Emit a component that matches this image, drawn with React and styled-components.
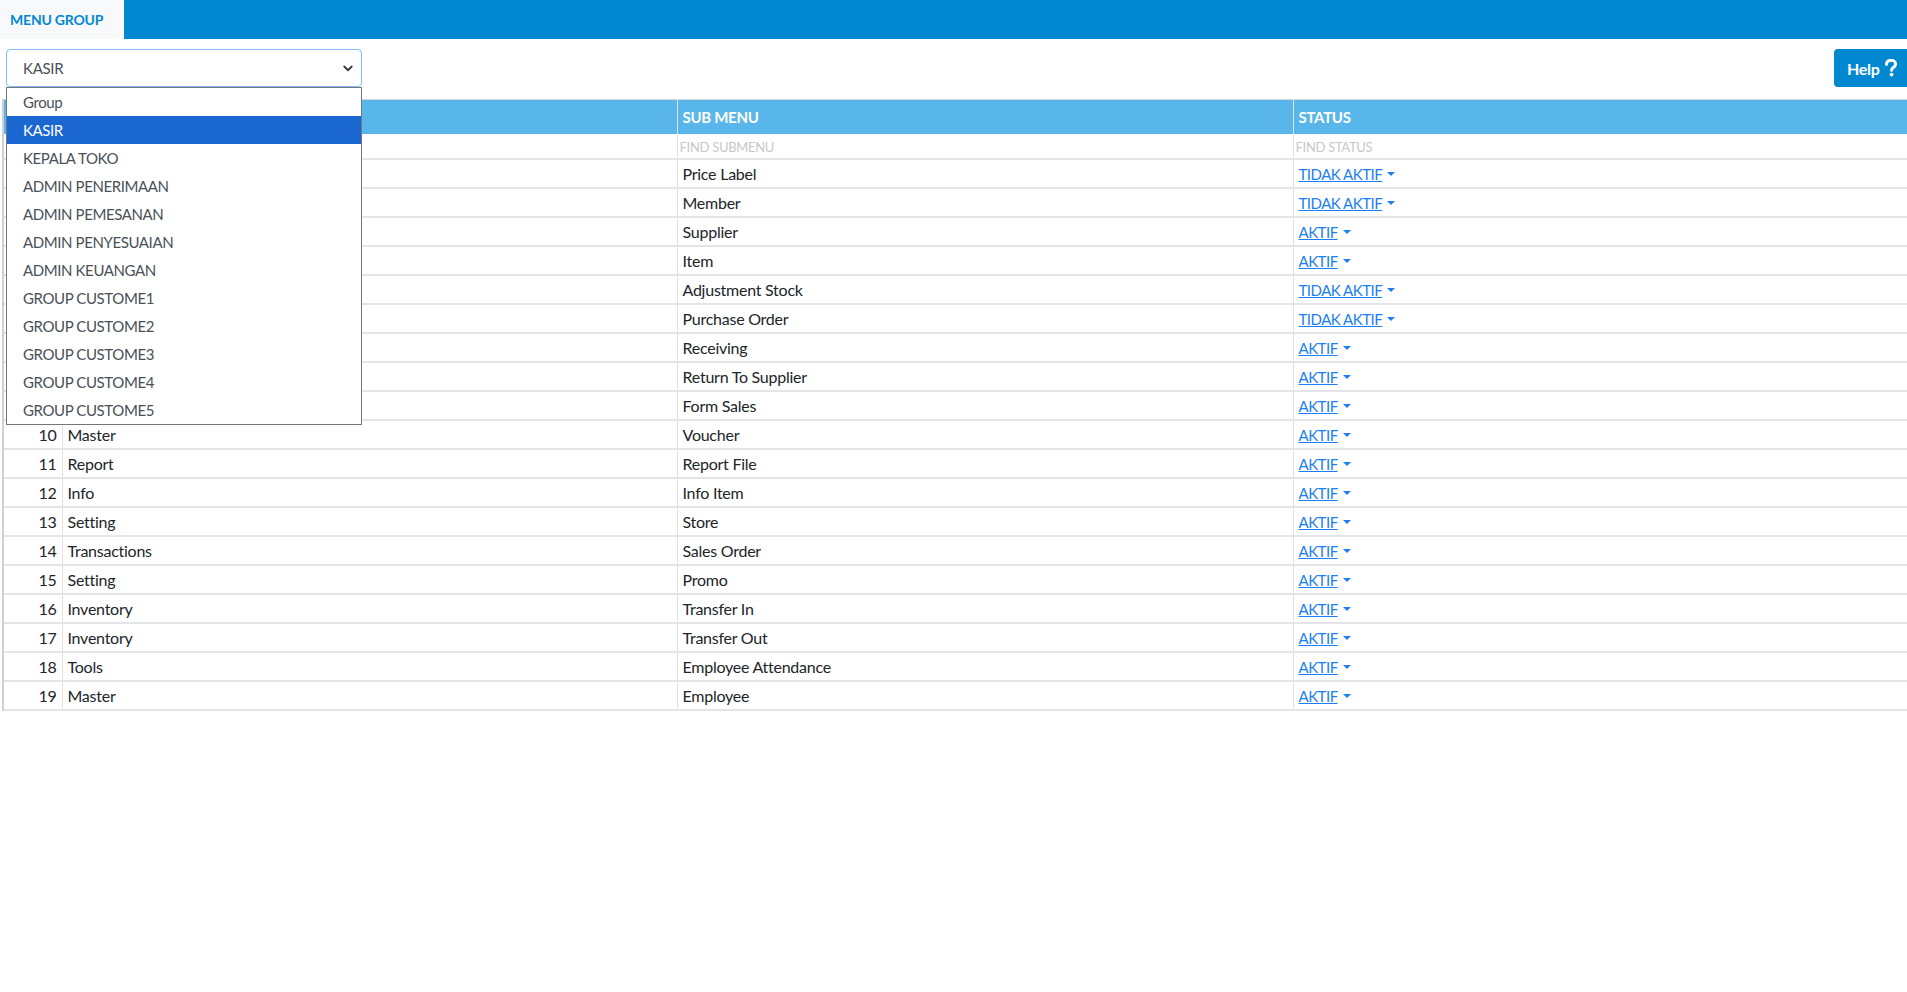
import styled, { createGlobalStyle } from 'styled-components'

const GlobalStyle = createGlobalStyle`
  html, body {
    margin: 0;
    padding: 0;
    background: #fff;
    overflow-x: hidden;
  }
  body {
    font-family: Lato, 'Noto Sans', sans-serif;
    color: #212529;
  }
  * { box-sizing: border-box; }
`

const Page = styled.div`
  width: 1915px;
`

const TopBar = styled.div`
  height: 39px;
  background: #0288d1;
  display: flex;
`

const Tab = styled.div`
  width: 124px;
  background: #f8f9fa;
  color: #0288d1;
  font-weight: 700;
  font-size: 14px;
  display: flex;
  align-items: center;
  padding-left: 10px;
  letter-spacing: -0.2px;
`

const Toolbar = styled.div`
  display: flex;
  justify-content: space-between;
  align-items: center;
  padding: 10px 0 0 6px;
  height: 48px;
`

const SelectWrap = styled.div`
  position: relative;
  width: 356px;
`

const SelectBox = styled.div`
  height: 38px;
  border: 1px solid #80bdff;
  border-radius: 4px;
  display: flex;
  align-items: center;
  justify-content: space-between;
  padding: 0 7px 0 16px;
  font-size: 15px;
  letter-spacing: -0.3px;
  color: #495057;
`

const OptionList = styled.ul`
  position: absolute;
  top: 38px;
  left: 0;
  width: 356px;
  margin: 0;
  padding: 0;
  list-style: none;
  background: #fff;
  border: 1px solid #767676;
  z-index: 10;
`

const Option = styled.li`
  height: 28px;
  display: flex;
  align-items: center;
  padding-left: 16px;
  font-size: 15px;
  letter-spacing: -0.4px;
  color: ${p => (p.$active ? '#fff' : '#495057')};
  background: ${p => (p.$active ? '#1a67d2' : 'transparent')};
`

const HelpButton = styled.button`
  height: 38px;
  width: 81px;
  border: none;
  border-radius: 4px;
  background: #0288d1;
  color: #fff;
  font-family: Lato, 'Noto Sans', sans-serif;
  font-weight: 700;
  font-size: 16px;
  letter-spacing: -0.3px;
  display: flex;
  align-items: center;
  gap: 4px;
  padding: 0 0 0 13px;
`

const TableWrap = styled.div`
  margin: 12px 0 0 2px;
  width: 1907px;
  border-left: 2px solid #d0d0d0;
`

const Table = styled.table`
  border-collapse: collapse;
  table-layout: fixed;
  width: 1906px;
  font-size: 16px;
  letter-spacing: -0.25px;
  border-top: 1px solid #d6d6d6;
  border-bottom: 2px solid #d6d6d6;
`

const Th = styled.th`
  height: 34px;
  background: #59b6ea;
  color: #fff;
  font-weight: 700;
  font-size: 15px;
  letter-spacing: -0.3px;
  text-align: left;
  padding: 0 5px;
  border-left: 1px solid #d9e6ee;
  &:first-child { border-left: none; }
`

const FilterCell = styled.td`
  height: 25px;
  padding: 0 2px;
  border-left: 1px solid #dee2e6;
  border-bottom: 2px solid #e3e5e8;
  &:first-child { border-left: none; }
`

const FilterInput = styled.input`
  border: none;
  outline: none;
  width: 100%;
  font-family: Lato, 'Noto Sans', sans-serif;
  font-size: 13px;
  letter-spacing: -0.3px;
  color: #555;
  padding: 0;
  &::placeholder { color: #c8c8c8; }
`

const Td = styled.td`
  height: 29px;
  padding: 0 5px;
  border-left: 1px solid #dee2e6;
  border-bottom: 2px solid #e3e5e8;
  text-align: ${p => (p.$num ? 'right' : 'left')};
  white-space: nowrap;
  &:first-child { border-left: none; }
`

const StatusLink = styled.a`
  color: #1a7ef5;
  font-size: 15px;
  letter-spacing: -0.5px;
  text-decoration: underline;
  cursor: pointer;
  &::after {
    content: '';
    display: inline-block;
    margin-left: 5px;
    vertical-align: 4px;
    border-top: 4px solid #1a7ef5;
    border-left: 4px solid transparent;
    border-right: 4px solid transparent;
  }
`

const groups = [
  'Group', 'KASIR', 'KEPALA TOKO', 'ADMIN PENERIMAAN', 'ADMIN PEMESANAN',
  'ADMIN PENYESUAIAN', 'ADMIN KEUANGAN', 'GROUP CUSTOME1', 'GROUP CUSTOME2',
  'GROUP CUSTOME3', 'GROUP CUSTOME4', 'GROUP CUSTOME5',
]

const rows = [
  ['Master', 'Price Label', 'TIDAK AKTIF'],
  ['Master', 'Member', 'TIDAK AKTIF'],
  ['Master', 'Supplier', 'AKTIF'],
  ['Master', 'Item', 'AKTIF'],
  ['Inventory', 'Adjustment Stock', 'TIDAK AKTIF'],
  ['Transactions', 'Purchase Order', 'TIDAK AKTIF'],
  ['Transactions', 'Receiving', 'AKTIF'],
  ['Transactions', 'Return To Supplier', 'AKTIF'],
  ['Transactions', 'Form Sales', 'AKTIF'],
  ['Master', 'Voucher', 'AKTIF'],
  ['Report', 'Report File', 'AKTIF'],
  ['Info', 'Info Item', 'AKTIF'],
  ['Setting', 'Store', 'AKTIF'],
  ['Transactions', 'Sales Order', 'AKTIF'],
  ['Setting', 'Promo', 'AKTIF'],
  ['Inventory', 'Transfer In', 'AKTIF'],
  ['Inventory', 'Transfer Out', 'AKTIF'],
  ['Tools', 'Employee Attendance', 'AKTIF'],
  ['Master', 'Employee', 'AKTIF'],
]

function Chevron() {
  return (
    <svg width="12" height="12" viewBox="0 0 16 16">
      <path d="M3 6 L8 11 L13 6" fill="none" stroke="#343a40" strokeWidth="2.4" strokeLinecap="round" strokeLinejoin="round" />
    </svg>
  )
}

function QuestionIcon() {
  return (
    <svg width="14" height="18" viewBox="0 0 14 18">
      <path d="M2.5 5.2 C2.5 2.6 4.6 1.2 7 1.2 C9.6 1.2 11.6 2.8 11.6 5.1 C11.6 7.1 10.2 8 9 8.8 C8 9.5 7.6 10 7.6 11.3" fill="none" stroke="#fff" strokeWidth="3" strokeLinecap="round" />
      <circle cx="7.6" cy="15.6" r="1.9" fill="#fff" />
    </svg>
  )
}

export default function App() {
  return (
    <Page>
      <GlobalStyle />
      <TopBar>
        <Tab>MENU GROUP</Tab>
      </TopBar>

      <Toolbar>
        <SelectWrap>
          <SelectBox>
            <span>KASIR</span>
            <Chevron />
          </SelectBox>
          <OptionList>
            {groups.map(g => (
              <Option key={g} $active={g === 'KASIR'}>{g}</Option>
            ))}
          </OptionList>
        </SelectWrap>
        <HelpButton>
          Help <QuestionIcon />
        </HelpButton>
      </Toolbar>

      <TableWrap>
        <Table>
          <colgroup>
            <col style={{ width: 58 }} />
            <col style={{ width: 615 }} />
            <col style={{ width: 616 }} />
            <col style={{ width: 617 }} />
          </colgroup>
          <thead>
            <tr>
              <Th>NO</Th>
              <Th>MENU</Th>
              <Th>SUB MENU</Th>
              <Th>STATUS</Th>
            </tr>
          </thead>
          <tbody>
            <tr>
              <FilterCell />
              <FilterCell><FilterInput placeholder="FIND MENU" /></FilterCell>
              <FilterCell><FilterInput placeholder="FIND SUBMENU" /></FilterCell>
              <FilterCell><FilterInput placeholder="FIND STATUS" /></FilterCell>
            </tr>
            {rows.map((r, i) => (
              <tr key={i}>
                <Td $num>{i + 1}</Td>
                <Td>{r[0]}</Td>
                <Td>{r[1]}</Td>
                <Td><StatusLink>{r[2]}</StatusLink></Td>
              </tr>
            ))}
          </tbody>
        </Table>
      </TableWrap>
    </Page>
  )
}
